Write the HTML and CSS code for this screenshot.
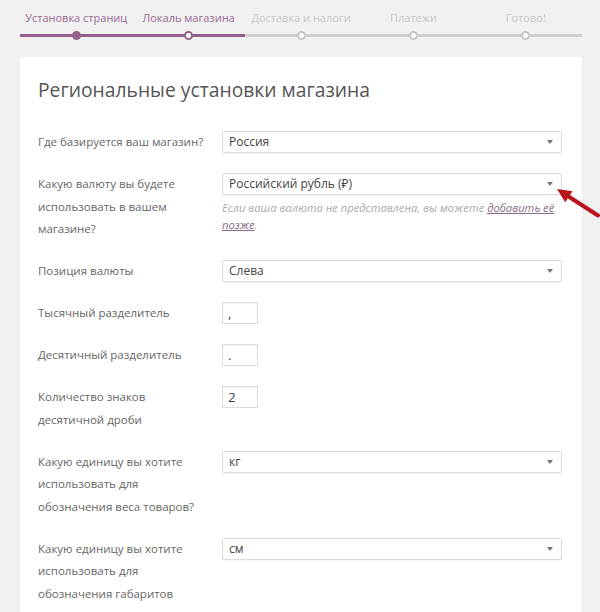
FILE: index.html
```html
<!DOCTYPE html>
<html lang="ru">
<head>
<meta charset="utf-8">
<title>Региональные установки магазина</title>
<link rel="stylesheet" href="styles.css">
</head>
<body>
<ol class="steps">
  <li class="step done">Установка страниц</li>
  <li class="step active">Локаль магазина</li>
  <li class="step">Доставка и налоги</li>
  <li class="step">Платежи</li>
  <li class="step">Готово!</li>
</ol>
<main class="card">
  <h1 class="title">Региональные установки магазина</h1>
  <div class="form">
    <div class="row">
      <div class="label">Где базируется ваш магазин?</div>
      <div class="control"><div class="select">Россия</div></div>
    </div>
    <div class="row">
      <div class="label">Какую валюту вы будете использовать в вашем магазине?</div>
      <div class="control">
        <div class="select">Российский рубль (₽)</div>
        <p class="help">Если ваша валюта не представлена, вы можете <a class="link" href="#">добавить её позже</a>.</p>
      </div>
    </div>
    <div class="row">
      <div class="label">Позиция валюты</div>
      <div class="control"><div class="select">Слева</div></div>
    </div>
    <div class="row">
      <div class="label">Тысячный разделитель</div>
      <div class="control"><div class="input">,</div></div>
    </div>
    <div class="row">
      <div class="label">Десятичный разделитель</div>
      <div class="control"><div class="input">.</div></div>
    </div>
    <div class="row">
      <div class="label">Количество знаков десятичной дроби</div>
      <div class="control"><div class="input">2</div></div>
    </div>
    <div class="row">
      <div class="label">Какую единицу вы хотите использовать для обозначения веса товаров?</div>
      <div class="control"><div class="select">кг</div></div>
    </div>
    <div class="row">
      <div class="label">Какую единицу вы хотите использовать для обозначения габаритов</div>
      <div class="control"><div class="select">см</div></div>
    </div>
  </div>
</main>
<svg class="pointer" width="50" height="36" viewBox="0 0 50 36" aria-hidden="true">
  <line x1="17" y1="12.5" x2="48" y2="32.5" stroke="#b8141c" stroke-width="4" stroke-linecap="round"/>
  <polygon points="7,6 22.5,8.3 15.2,19.2" fill="#b8141c"/>
</svg>
</body>
</html>
```

FILE: styles.css
```css
html, body {
  margin: 0;
  padding: 0;
}
body {
  background: #f1f1f1;
  font-family: "Open Sans", "Noto Sans", sans-serif;
  color: #555;
  width: 600px;
  height: 612px;
  overflow: hidden;
}
.steps {
  list-style: none;
  display: flex;
  margin: 0 18px 0 20px;
  padding: 10px 0 0;
}
.step {
  flex: 1;
  position: relative;
  text-align: center;
  font-size: 11px;
  line-height: 16px;
  color: #c8c8c8;
  padding-bottom: 8px;
  border-bottom: 3px solid #cfcfcf;
  white-space: nowrap;
}
.step.done, .step.active {
  color: #9a6a91;
  border-bottom-color: #96608c;
}
.step::before {
  content: "";
  position: absolute;
  left: 50%;
  bottom: -6px;
  width: 5px;
  height: 5px;
  margin-left: -4.5px;
  border: 2px solid #c8c8c8;
  border-radius: 50%;
  background: #fff;
}
.step.done::before {
  background: #96608c;
  border-color: #96608c;
}
.step.active::before {
  border-color: #96608c;
}
.card {
  display: block;
  background: #fff;
  margin: 20px 18px 0 20px;
  padding: 19px 20px 30px 18px;
  box-shadow: 0 1px 2px rgba(0,0,0,0.06);
}
.title {
  margin: 0 0 27px;
  font-size: 19.3px;
  line-height: 28px;
  font-weight: 400;
  color: #555;
}
.form {
  display: flex;
  flex-direction: column;
  gap: 19.5px;
}
.row {
  display: grid;
  grid-template-columns: 184px 340px;
  align-items: start;
}
.label {
  font-size: 11.5px;
  line-height: 22.5px;
  color: #666;
  max-width: 174px;
}
.select {
  position: relative;
  box-sizing: border-box;
  height: 22px;
  border: 1px solid #dcdcdc;
  border-radius: 2px;
  box-shadow: 0 1px 1px rgba(0,0,0,0.05);
  font-size: 12px;
  line-height: 20px;
  color: #444;
  padding-left: 6px;
  background: #fff;
}
.select::after {
  content: "";
  position: absolute;
  right: 8px;
  top: 8px;
  border-left: 3.5px solid transparent;
  border-right: 3.5px solid transparent;
  border-top: 4px solid #777;
}
.input {
  box-sizing: border-box;
  width: 36px;
  height: 22px;
  border: 1px solid #dcdcdc;
  box-shadow: inset 0 1px 1px rgba(0,0,0,0.04);
  font-size: 13.5px;
  line-height: 20px;
  color: #444;
  padding-left: 5px;
}
.help {
  margin: 4px 0 0;
  font-size: 11.2px;
  line-height: 17px;
  font-style: italic;
  color: #aaa;
}
.link {
  color: #8a6a84;
  text-decoration: underline;
}
.pointer {
  position: absolute;
  left: 550px;
  top: 183px;
}
```
